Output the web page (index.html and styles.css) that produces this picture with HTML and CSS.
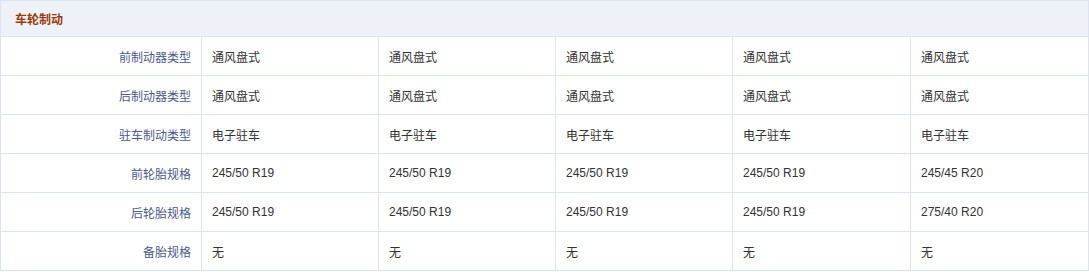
FILE: index.html
```html
<!DOCTYPE html>
<html lang="zh-CN">
<head>
<meta charset="utf-8">
<title>车轮制动</title>
<link rel="stylesheet" href="styles.css">
</head>
<body>
<table class="spec">
  <colgroup>
    <col class="c-label">
    <col class="c-val">
    <col class="c-val">
    <col class="c-val">
    <col class="c-val2">
    <col class="c-val2">
  </colgroup>
  <thead>
    <tr class="head"><th colspan="6">车轮制动</th></tr>
  </thead>
  <tbody>
    <tr><th>前制动器类型</th><td>通风盘式</td><td>通风盘式</td><td>通风盘式</td><td>通风盘式</td><td>通风盘式</td></tr>
    <tr><th>后制动器类型</th><td>通风盘式</td><td>通风盘式</td><td>通风盘式</td><td>通风盘式</td><td>通风盘式</td></tr>
    <tr><th>驻车制动类型</th><td>电子驻车</td><td>电子驻车</td><td>电子驻车</td><td>电子驻车</td><td>电子驻车</td></tr>
    <tr><th>前轮胎规格</th><td>245/50 R19</td><td>245/50 R19</td><td>245/50 R19</td><td>245/50 R19</td><td>245/45 R20</td></tr>
    <tr><th>后轮胎规格</th><td>245/50 R19</td><td>245/50 R19</td><td>245/50 R19</td><td>245/50 R19</td><td>275/40 R20</td></tr>
    <tr><th>备胎规格</th><td>无</td><td>无</td><td>无</td><td>无</td><td>无</td></tr>
  </tbody>
</table>
</body>
</html>
```
FILE: styles.css
```css
html, body {
  margin: 0;
  padding: 0;
  background: #ffffff;
}
body {
  font-family: "Liberation Sans", "Noto Sans CJK SC", Arial, sans-serif;
  font-size: 12px;
  color: #333333;
}
.spec {
  border-collapse: collapse;
  table-layout: fixed;
  width: 1089px;
}
.c-label { width: 201px; }
.c-val { width: 177px; }
.c-val2 { width: 178px; }
.spec th,
.spec td {
  border: 1px solid #dbe5f1;
  height: 38px;
  padding: 0;
  font-size: 12px;
  font-weight: normal;
  vertical-align: middle;
  white-space: nowrap;
}
.spec tbody th {
  text-align: right;
  padding-right: 10px;
  color: #4a5a8c;
}
.spec td {
  text-align: left;
  padding-left: 10px;
  color: #333333;
}
.spec .head th {
  height: 35px;
  background: #eef2f8;
  text-align: left;
  padding-left: 14px;
  font-weight: bold;
  color: #9a3b08;
}
```
